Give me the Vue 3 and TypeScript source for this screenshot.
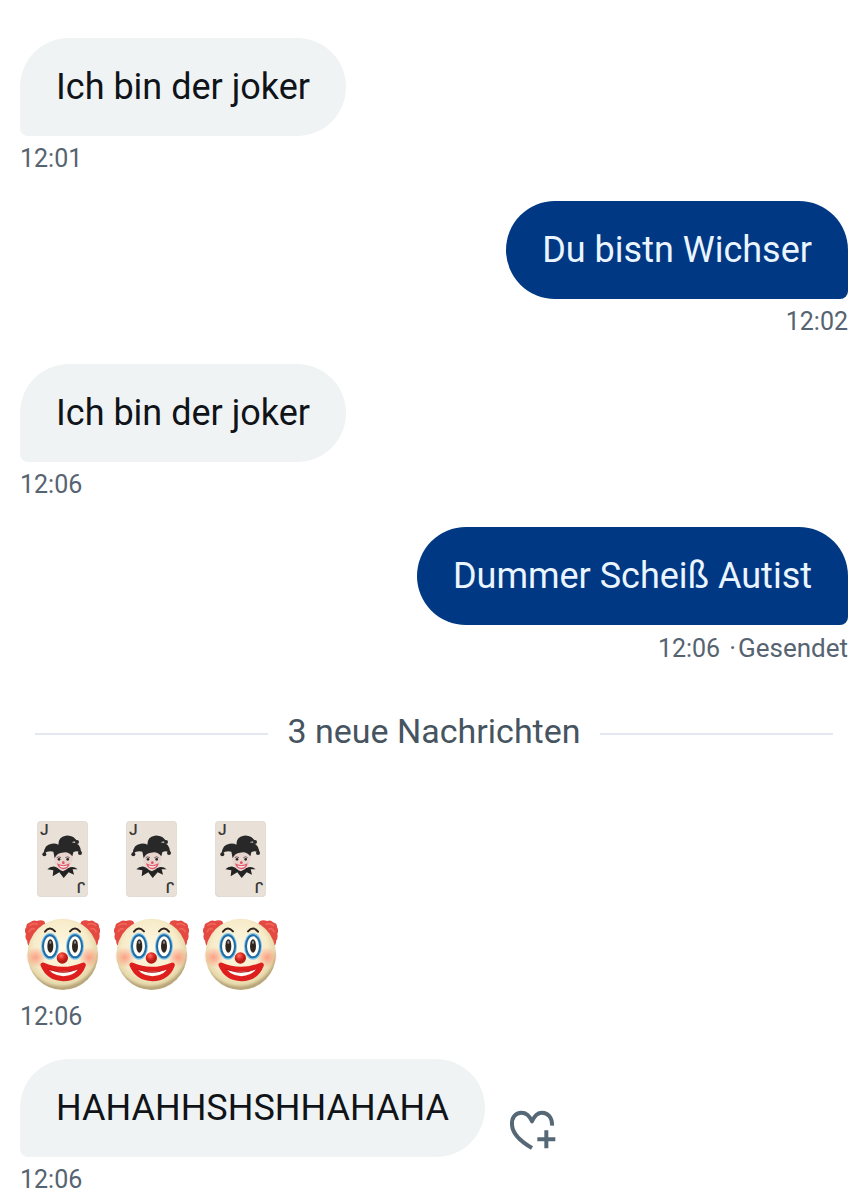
<script setup lang="ts">
interface Message {
  id: number
  side: 'in' | 'out'
  text?: string
  time: string
  status?: string
  reactable?: boolean
}

const earlier: Message[] = [
  { id: 1, side: 'in', text: 'Ich bin der joker', time: '12:01' },
  { id: 2, side: 'out', text: 'Du bistn Wichser', time: '12:02' },
  { id: 3, side: 'in', text: 'Ich bin der joker', time: '12:06' },
  { id: 4, side: 'out', text: 'Dummer Scheiß Autist', time: '12:06', status: 'Gesendet' },
]

const recent: Message[] = [
  { id: 5, side: 'in', time: '12:06' },
  { id: 6, side: 'in', text: 'HAHAHHSHSHHAHAHA', time: '12:06', reactable: true },
]

const groups = [earlier, recent]
</script>

<template>
  <main class="chat">
    <template v-for="(group, g) in groups" :key="g">
      <div v-if="g === 1" class="divider"><span>3 neue Nachrichten</span></div>
      <article v-for="m in group" :key="m.id" class="message" :class="m.side">
        <div v-if="m.text" class="row">
          <p class="bubble">{{ m.text }}</p>
          <button v-if="m.reactable" class="react" type="button" aria-label="Reagieren">
            <svg viewBox="34 38 144 132" aria-hidden="true">
              <path
                d="M163 91C164 66 150 52 133 52C118 52 109 64 103 78C97 64 87 52 71 52C54 52 41 66 43 89C45 115 68 138 103 158"
                fill="none" stroke="#566875" stroke-width="12" stroke-linejoin="round"
              />
              <path d="M146 105V159M119 132H173" fill="none" stroke="#566875" stroke-width="12" />
            </svg>
          </button>
        </div>
        <div v-else class="emojis">
          <div class="cards">
            <svg v-for="n in 3" :key="n" class="card" viewBox="51 36 153 228" role="img" aria-label="Joker">
              <rect x="52" y="37" width="151" height="226" rx="11" fill="#e9e1d7" stroke="#dbd2c8" stroke-width="2" />
              <text class="pip" x="60" y="79">J</text>
              <text class="pip" x="60" y="79" transform="rotate(180 128 149)">J</text>
              <path
                d="M82 181Q91 171 105 173L112 176L145 177Q160 170 173 181L158 181L162 197L146 190L131 207L118 190L98 202L100 184Z"
                fill="#242323"
              />
              <path d="M103 137Q97 174 129 187Q160 174 158 135L143 119Z" fill="#e9d3cd" />
              <path
                d="M71 134Q73 106 95 104Q107 102 115 107Q115 83 137 80Q160 77 173 99Q162 96 155 100Q182 100 184 132Q171 122 160 130L157 142Q144 125 126 131Q111 132 104 148L100 128Q85 124 71 134Z"
                fill="#292829"
              />
              <g fill="#292829">
                <circle cx="73" cy="136" r="6" />
                <circle cx="171" cy="99" r="6" />
                <circle cx="180" cy="132" r="6" />
              </g>
              <path d="M110 146Q116 141 123 146M136 146Q143 141 149 146" fill="none" stroke="#292829" stroke-width="2" />
              <circle cx="117" cy="151" r="4" fill="#252525" />
              <circle cx="143" cy="151" r="4" fill="#252525" />
              <circle cx="130" cy="161" r="4" fill="#e74c61" />
              <path d="M111 163Q130 174 149 163Q146 180 130 181Q115 179 111 163Z" fill="#e0566b" />
              <path d="M118 169Q130 175 143 169L139 174Q130 178 121 174Z" fill="#fff4f3" />
            </svg>
          </div>
          <div class="clowns">
            <svg v-for="n in 3" :key="n" class="clown" viewBox="30 25 225 219" role="img" aria-label="Clown">
              <defs>
                <radialGradient :id="`face${n}`" cx=".48" cy=".42" r=".55">
                  <stop offset="0" stop-color="#fff9e4" />
                  <stop offset=".72" stop-color="#f7ebc9" />
                  <stop offset=".91" stop-color="#e6d8aa" />
                  <stop offset="1" stop-color="#b9a67a" />
                </radialGradient>
                <radialGradient :id="`cheek${n}`">
                  <stop offset="0" stop-color="#ff8068" stop-opacity=".7" />
                  <stop offset="1" stop-color="#ff8068" stop-opacity="0" />
                </radialGradient>
                <radialGradient :id="`nose${n}`" cx=".4" cy=".3">
                  <stop offset="0" stop-color="#ff7565" />
                  <stop offset=".6" stop-color="#de2c24" />
                  <stop offset="1" stop-color="#b41c16" />
                </radialGradient>
              </defs>
              <path
                d="M88 35Q78 29 66 34Q54 29 46 38Q33 41 34 53Q26 61 33 73Q28 85 37 94Q35 105 45 109L67 82L92 46ZM200 35Q210 29 222 34Q234 29 240 38Q253 41 252 53Q258 61 253 73Q256 85 249 94Q251 105 241 109L219 82L194 46Z"
                fill="#e54a42"
              />
              <path
                d="M44 47Q56 38 67 44M43 66Q48 54 58 58M242 47Q230 38 219 44M243 66Q238 54 228 58"
                fill="none" stroke="#ee665a" stroke-width="5" stroke-linecap="round"
              />
              <ellipse cx="143" cy="134" rx="106" ry="107" :fill="`url(#face${n})`" />
              <circle cx="62" cy="143" r="31" :fill="`url(#cheek${n})`" />
              <circle cx="222" cy="143" r="31" :fill="`url(#cheek${n})`" />
              <g fill="#fffef8" stroke="#7fc9ef" stroke-width="12">
                <ellipse cx="105" cy="110" rx="21" ry="34" />
                <ellipse cx="180" cy="110" rx="21" ry="34" />
              </g>
              <g fill="#fffef8" stroke="#236ba3" stroke-width="6">
                <ellipse cx="105" cy="110" rx="21" ry="33" />
                <ellipse cx="180" cy="110" rx="21" ry="33" />
              </g>
              <g fill="#302620">
                <ellipse cx="106" cy="109" rx="9" ry="20" />
                <ellipse cx="180" cy="109" rx="9" ry="20" />
              </g>
              <g fill="#8f8b88">
                <ellipse cx="106" cy="98" rx="3" ry="5" />
                <ellipse cx="180" cy="98" rx="3" ry="5" />
              </g>
              <path d="M90 66Q103 48 120 65M165 65Q181 48 195 66" fill="none" stroke="#30231e" stroke-width="6" stroke-linecap="round" />
              <path
                d="M84 166Q142 192 205 166Q190 206 145 207Q101 206 84 166Z"
                fill="#fffdf5" stroke="#df1f1d" stroke-width="15" stroke-linejoin="round"
              />
              <path d="M94 176Q145 197 196 175Q145 203 94 176Z" fill="#a80f12" />
              <circle cx="142" cy="145" r="17" :fill="`url(#nose${n})`" />
            </svg>
          </div>
        </div>
        <footer class="meta">
          <time>{{ m.time }}</time>
          <span v-if="m.status" class="status">·<span>{{ m.status }}</span></span>
        </footer>
      </article>
    </template>
  </main>
</template>

<style>
body {
  margin: 0;
  background: #fff;
}
</style>

<style scoped>
.chat {
  padding: 38px 20px 0;
  font-family: Roboto, "Liberation Sans", sans-serif;
  color: #101419;
}
.message {
  display: flex;
  flex-direction: column;
  align-items: flex-start;
  margin-bottom: 25px;
}
.message:last-child {
  margin-bottom: 0;
}
.out {
  align-items: flex-end;
}
.row {
  display: flex;
  align-items: flex-end;
  gap: 24px;
}
.bubble {
  margin: 0;
  padding: 25px 36px;
  border-radius: 49px 49px 49px 8px;
  background: #eff3f4;
  font-size: 36px;
  line-height: 48px;
}
.out .bubble {
  border-radius: 49px 49px 8px 49px;
  background: #003884;
  color: #eaf5ff;
}
.meta {
  display: flex;
  align-items: baseline;
  gap: 9px;
  margin-top: 6px;
  font-size: 25px;
  line-height: 34px;
  color: #566370;
}
.status {
  display: flex;
  gap: 2px;
  font-size: 26px;
}
.react {
  display: block;
  margin-bottom: 5px;
  padding: 0;
  border: 0;
  background: none;
}
.react svg {
  display: block;
  width: 48px;
  height: 44px;
}
.divider {
  display: flex;
  align-items: center;
  gap: 19px;
  margin: 45px 15px 64px;
  font-size: 34px;
  line-height: 40px;
  color: #46545f;
}
.divider span {
  padding-bottom: 6px;
}
.divider::before,
.divider::after {
  content: "";
  flex: 1;
  height: 2px;
  background: #e3e8f0;
}
.emojis {
  padding-bottom: 3px;
}
.cards {
  display: flex;
  gap: 38px;
  margin: 0 0 21px 17px;
}
.card {
  width: 51px;
  height: 76px;
}
.pip {
  font: 500 46px Roboto, sans-serif;
  fill: #383735;
}
.clowns {
  display: flex;
  gap: 14px;
  margin-left: 5px;
}
.clown {
  width: 75px;
  height: 73px;
}
</style>
